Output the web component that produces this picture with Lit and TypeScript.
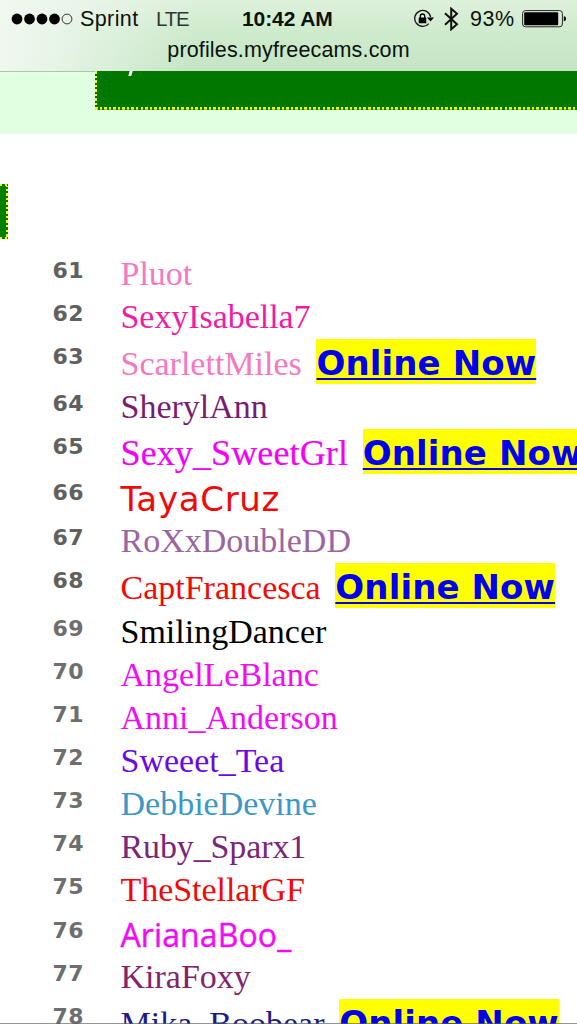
import { LitElement, html, css, svg, nothing } from "lit";
import { customElement } from "lit/decorators.js";
import { styleMap } from "lit/directives/style-map.js";

interface Entry {
  rank: number;
  name: string;
  color: string;
  height: number;
  face?: "georgia" | "verdana" | "trebuchet";
  online?: boolean;
  spacing?: number;
}

const ENTRIES: Entry[] = [
  { rank: 61, name: "Pluot", color: "#f777c4", height: 43 },
  { rank: 62, name: "SexyIsabella7", color: "#f01ca6", height: 43, spacing: -0.05 },
  { rank: 63, name: "ScarlettMiles", color: "#f777c0", height: 47, online: true },
  { rank: 64, name: "SherylAnn", color: "#781c72", height: 43 },
  { rank: 65, name: "Sexy_SweetGrl", color: "#f400f4", height: 45.5, online: true, face: "georgia", spacing: 0.12 },
  { rank: 66, name: "TayaCruz", color: "#f30808", height: 45.5, face: "verdana", spacing: 0.7 },
  { rank: 67, name: "RoXxDoubleDD", color: "#9c64a0", height: 43 },
  { rank: 68, name: "CaptFrancesca", color: "#f30808", height: 48, online: true },
  { rank: 69, name: "SmilingDancer", color: "#000000", height: 43 },
  { rank: 70, name: "AngelLeBlanc", color: "#f30cf3", height: 43 },
  { rank: 71, name: "Anni_Anderson", color: "#f30cf3", height: 43 },
  { rank: 72, name: "Sweeet_Tea", color: "#6a08e4", height: 43 },
  { rank: 73, name: "DebbieDevine", color: "#3a98c8", height: 43 },
  { rank: 74, name: "Ruby_Sparx1", color: "#7c2478", height: 43, spacing: -0.12 },
  { rank: 75, name: "TheStellarGF", color: "#f30808", height: 43.5, spacing: -0.05 },
  { rank: 76, name: "ArianaBoo_", color: "#f30cf3", height: 43, face: "trebuchet", spacing: 0.1 },
  { rank: 77, name: "KiraFoxy", color: "#842468", height: 43 },
  { rank: 78, name: "Mika_Boobear", color: "#1c1c84", height: 47, online: true },
];

@customElement("status-bar")
export class StatusBar extends LitElement {
  static styles = css`
    :host {
      display: block;
      box-sizing: border-box;
      height: 71px;
      color: #0a120a;
      font-family: "Liberation Sans", Arial, sans-serif;
      background: linear-gradient(90deg, #f0f8f0 0, rgba(240, 248, 240, 0.75) 60px, rgba(240, 248, 240, 0) 190px),
        linear-gradient(180deg, #dff0dc 0, #cfebcd 45%, #c6e5c5 100%);
    }
    .row {
      display: grid;
      grid-template-columns: 242px 171px 1fr;
      height: 37px;
      line-height: 38px;
      font-size: 21.5px;
      white-space: nowrap;
    }
    .left, .right { display: flex; align-items: center; }
    .left { padding-left: 11px; }
    .dots { margin-right: 7px; }
    .carrier { width: 76px; letter-spacing: 0.4px; }
    .net { font-size: 20.5px; letter-spacing: -1.2px; color: #303830; }
    .time { font-weight: bold; font-size: 21px; letter-spacing: -0.1px; }
    .lock { margin-right: 10px; }
    .bt { margin-right: 11px; }
    .pct { width: 52px; letter-spacing: 0.6px; }
    .url { text-align: center; font-size: 21.5px; line-height: 26px; letter-spacing: 0.15px; }
    svg { display: block; flex: none; }
  `;

  render() {
    return html`
      <div class="row">
        <div class="left">
          <svg class="dots" width="62" height="14" viewBox="0 0 62 14">
            ${[6, 18.5, 31, 43.5].map((x) => svg`<circle cx=${x} cy="7" r="5.4" fill="#000" />`)}
            <circle cx="56" cy="7" r="4.9" fill="none" stroke="#222" stroke-width="0.9" />
          </svg>
          <span class="carrier">Sprint</span><span class="net">LTE</span>
        </div>
        <span class="time">10:42 AM</span>
        <div class="right">
          <svg class="lock" width="21" height="20" viewBox="0 0 21 20">
            <path d="M15.8 14.6A8 8 0 1 1 17.6 8" fill="none" stroke="#111" stroke-width="1.3" />
            <path d="M14 8.5h7l-3.5 4z" fill="#000" />
            <rect x="5.7" y="8.5" width="7.6" height="5.8" rx=".5" fill="#000" />
            <path d="M7.3 9V7.2a2.2 2.2 0 0 1 4.4 0V9" fill="none" stroke="#000" stroke-width="1.3" />
          </svg>
          <svg class="bt" width="15" height="24" viewBox="0 0 15 24">
            <path d="M1 6.3 13 17.2 7.2 22.3V1.7L13 6.8 1 17.7" fill="none" stroke="#111" stroke-width="2" />
          </svg>
          <span class="pct">93%</span>
          <svg width="45" height="18" viewBox="0 0 45 18">
            <rect x=".6" y=".6" width="39.8" height="16.2" rx="2.8" fill="none" stroke="#222" stroke-width="1" />
            <rect x="2.2" y="2.2" width="34" height="13" rx="1" fill="#000" />
            <path d="M41.8 6.2c3 .3 3 4.7 0 5z" fill="#000" />
          </svg>
        </div>
      </div>
      <div class="url">profiles.myfreecams.com</div>
    `;
  }
}

@customElement("app-root")
export class AppRoot extends LitElement {
  static styles = css`
    :host {
      display: flex;
      flex-direction: column;
      position: relative;
      box-sizing: border-box;
      width: 577px;
      height: 1024px;
      overflow: hidden;
      background: #fff;
      --dots-x: repeating-linear-gradient(90deg, #f6fa00 0 2.5px, #007800 2.5px 4.55px);
      --dots-y: repeating-linear-gradient(180deg, #f6fa00 0 2.5px, #007800 2.5px 4.55px);
    }
    :host::after {
      content: "";
      position: absolute;
      inset: auto 0 0 0;
      height: 1px;
      background: rgba(90, 90, 90, 0.65);
    }
    status-bar { flex: none; }
    .band {
      flex: none;
      box-sizing: border-box;
      height: 63px;
      padding-left: 95px;
      background: #e1ffe1;
      border-top: 1px solid #a9c8a9;
    }
    .banner {
      box-sizing: border-box;
      width: 482px;
      height: 39px;
      margin-top: -1px;
      padding-left: 34px;
      background: var(--dots-x) left bottom / 100% 2.7px no-repeat,
        var(--dots-y) left top / 2.4px 100% no-repeat, #007800;
    }
    .tail { width: 3px; height: 5px; background: #fff; transform: skewX(-16deg); }
    .side {
      flex: none;
      width: 8px;
      height: 55px;
      margin-top: 50px;
      background: var(--dots-x) left top / 100% 2.3px no-repeat,
        var(--dots-x) left bottom / 100% 2.3px no-repeat,
        var(--dots-y) right top / 2.4px 100% no-repeat, #008000;
    }
    .list { margin-top: 14px; padding-left: 52px; }
    .entry { display: grid; grid-template-columns: 68.5px max-content; }
    .rank {
      padding-left: 0.5px;
      font: bold 22px/35px "DejaVu Sans", Verdana, sans-serif;
      letter-spacing: 0.4px;
      color: #606060;
    }
    .late { color: #6e6e6e; }
    .who { display: flex; align-items: baseline; height: 43px; white-space: nowrap; }
    .name { font: 34px/41px "Liberation Serif", "Times New Roman", serif; }
    .georgia { font-size: 36px; -webkit-text-stroke: 0.2px currentColor; }
    .verdana { font: 34px/48px "DejaVu Sans", Verdana, sans-serif; }
    .trebuchet { font: 32px/43px "Open Sans", sans-serif; -webkit-text-stroke: 0.4px currentColor; }
    .online {
      box-sizing: border-box;
      height: 45px;
      margin-left: 14.7px;
      padding-top: 2px;
      background: #ff0;
      color: #0000ee;
      font: bold 34px/45px "DejaVu Sans", Verdana, sans-serif;
      letter-spacing: 0.1px;
      text-decoration: underline;
      text-decoration-thickness: 2px;
      text-underline-offset: 3px;
      text-decoration-skip-ink: none;
    }
  `;

  render() {
    return html`
      <status-bar></status-bar>
      <div class="band"><div class="banner"><div class="tail"></div></div></div>
      <div class="side"></div>
      <div class="list">
        ${ENTRIES.map(
          (e) => html`<div class="entry" style=${styleMap({ height: `${e.height}px` })}>
            <span class="rank ${e.rank > 68 ? "late" : ""}">${e.rank}</span>
            <div class="who">
              <span class="name ${e.face ?? ""}" style=${styleMap({ color: e.color, letterSpacing: `${e.spacing ?? 0}px` })}>${e.name}</span>
              ${e.online ? html`<a class="online">Online Now</a>` : nothing}
            </div>
          </div>`,
        )}
      </div>
    `;
  }
}
